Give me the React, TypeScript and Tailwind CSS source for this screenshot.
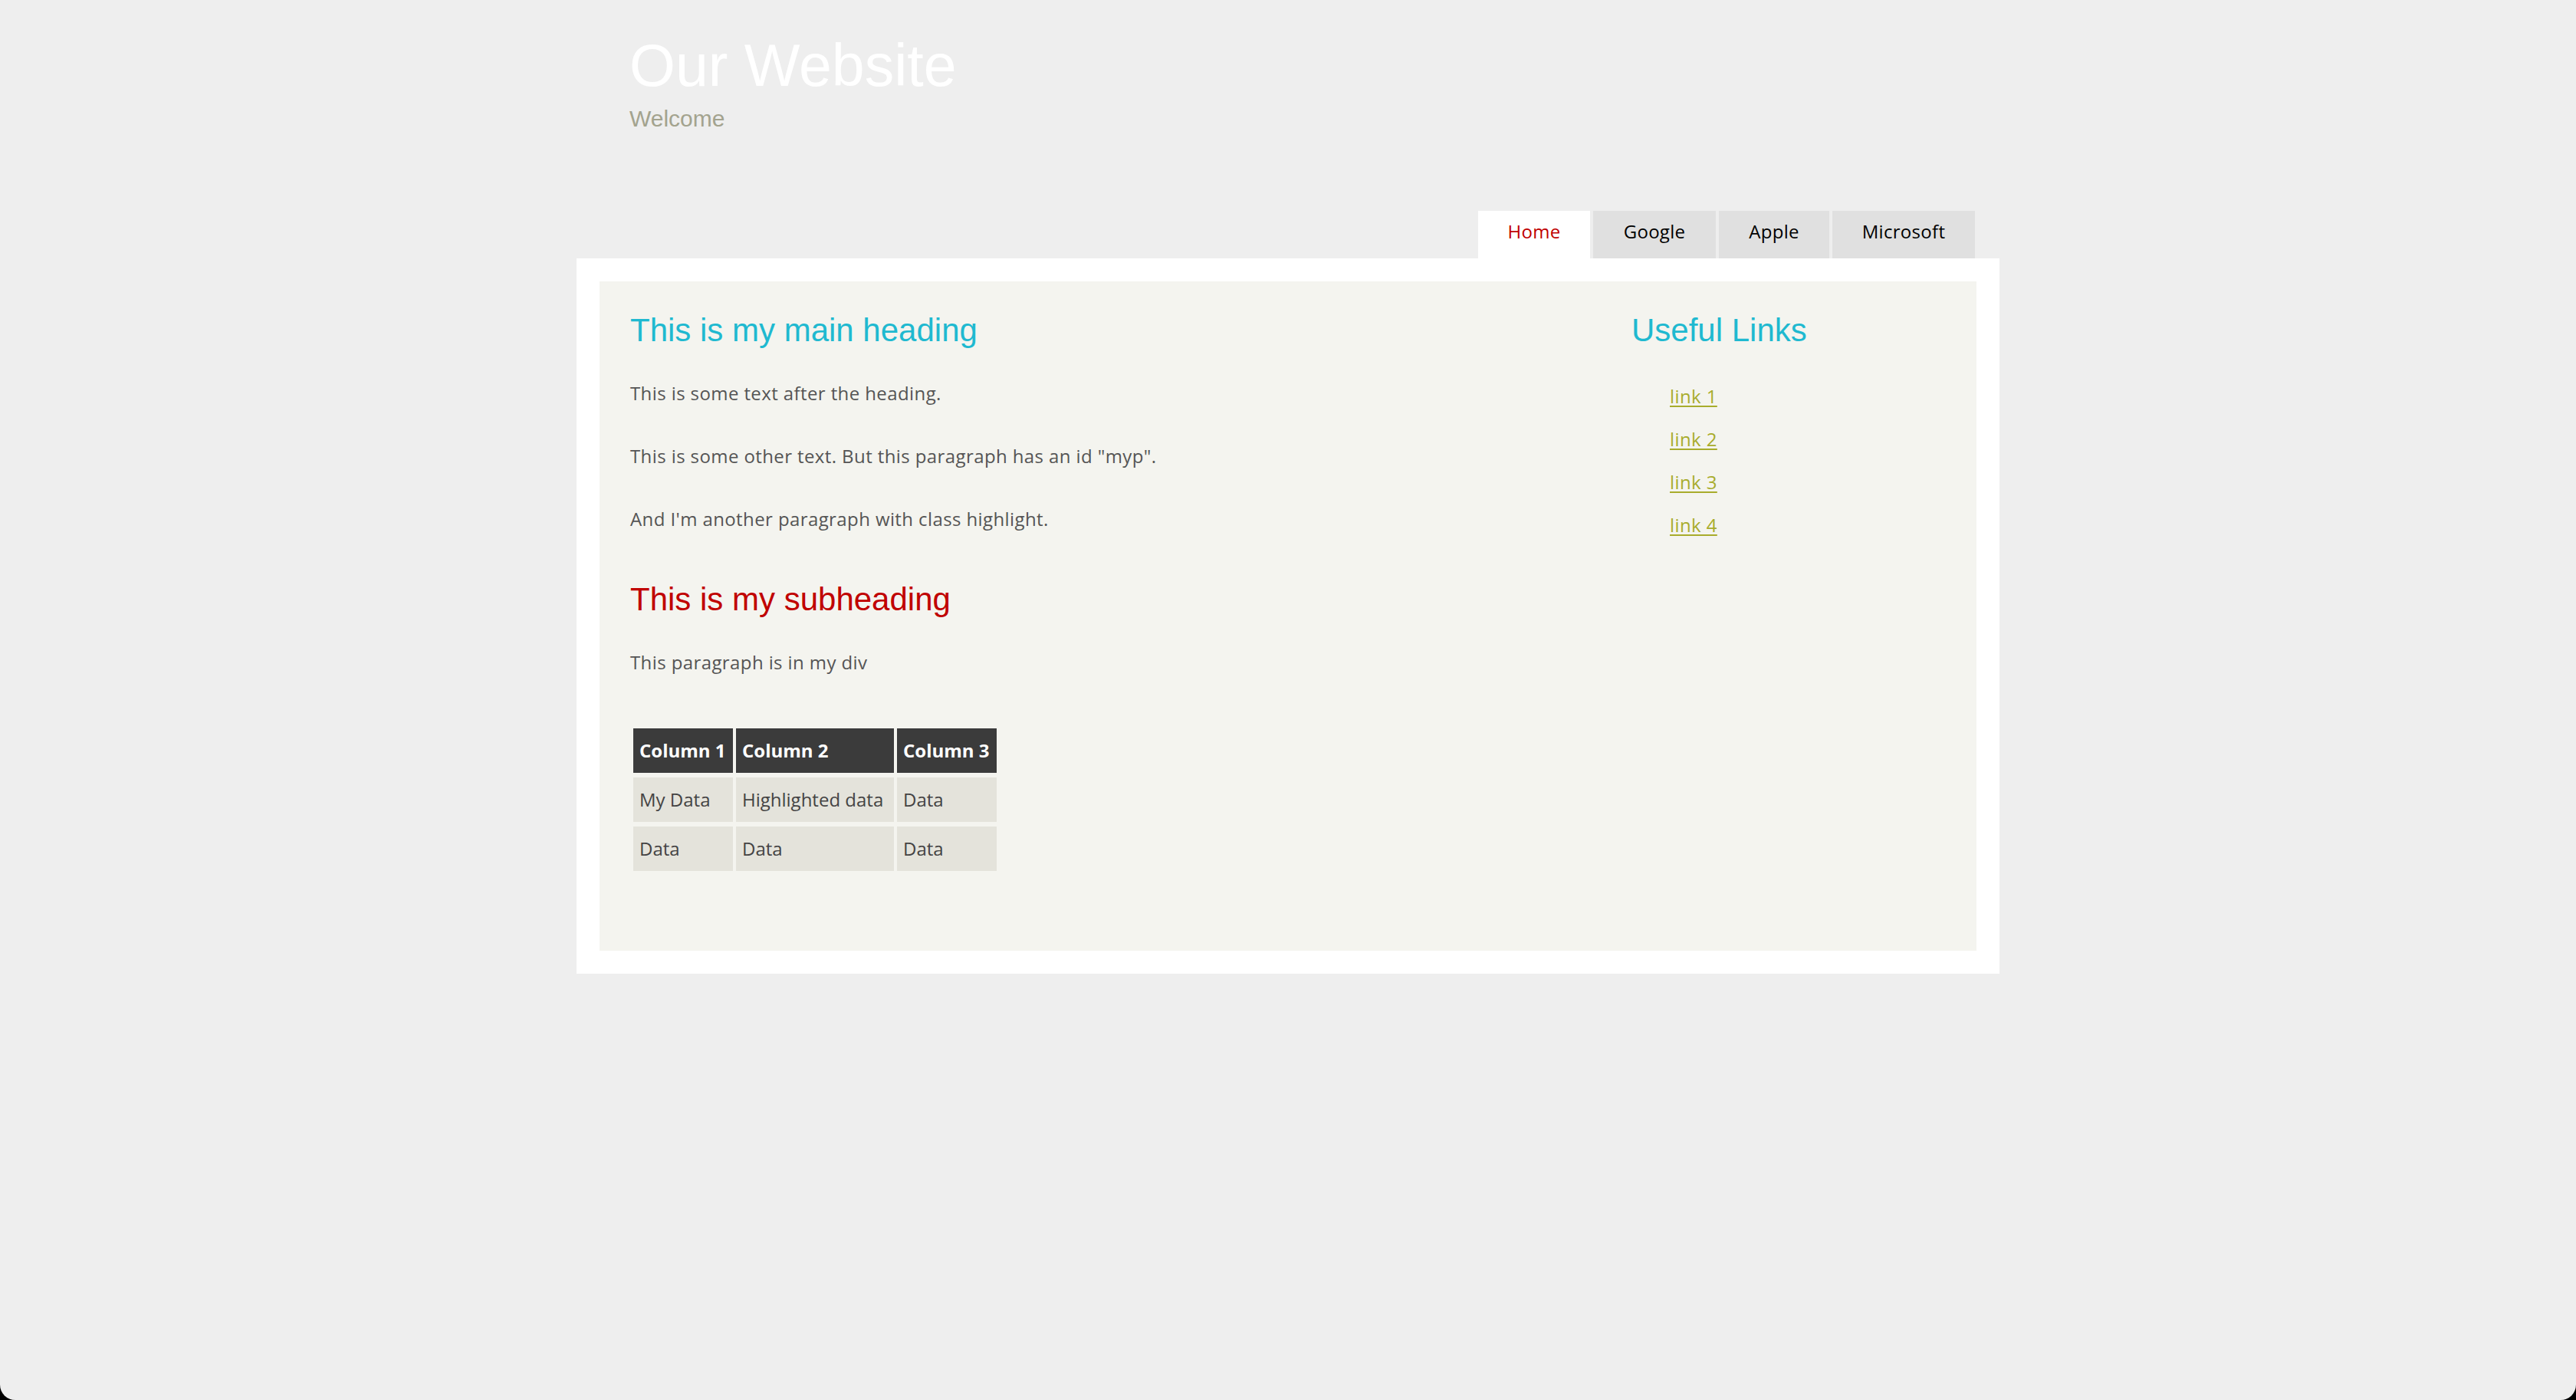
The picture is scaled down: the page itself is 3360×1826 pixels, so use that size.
import React from "react";

const body = { fontFamily: '"Open Sans", "Noto Sans", sans-serif' } as const;
const head = { fontFamily: '"Liberation Sans", Arial, sans-serif' } as const;

const tabs = [
  { label: "Home", w: "w-[146px]", active: true },
  { label: "Google", w: "w-[160px]", active: false },
  { label: "Apple", w: "w-[144px]", active: false },
  { label: "Microsoft", w: "w-[186px]", active: false },
];

export default function App() {
  return (
    <div className="bg-black min-h-[1826px]">
      <div className="h-[1826px] bg-[#eeeeee] rounded-b-[20px] overflow-hidden" style={body}>
        <div className="w-[1856px] mx-auto">
          <header className="pl-[69px] pt-[47px]">
            <h1 className="text-[77px] leading-[77px] text-white font-normal" style={head}>
              Our Website
            </h1>
            <p className="mt-[16px] text-[30px] leading-[30px] text-[#a3a38e]" style={head}>
              Welcome
            </p>
          </header>

          <nav className="mt-[105px] flex justify-end gap-[4px] pr-[32px]">
            {tabs.map((t) => (
              <a
                key={t.label}
                className={`${t.w} h-[62px] pb-[8px] flex items-center justify-center text-[24px] tracking-[0.3px] ${
                  t.active ? "bg-white text-[#c00000]" : "bg-[#e0e0e0] text-black"
                }`}
              >
                {t.label}
              </a>
            ))}
          </nav>

          <div className="bg-white p-[30px]">
            <div className="bg-[#f4f4ef] pl-[40px] pr-[40px] pt-[40px] pb-[40px] flex">
              <main className="flex-1 tracking-[0.4px]">
                <h2 className="text-[42px] leading-[48px] text-[#1fb9d0] font-normal tracking-normal" style={head}>
                  This is my main heading
                </h2>
                <p className="mt-[41px] text-[24px] leading-[34px] text-[#555555]">
                  This is some text after the heading.
                </p>
                <p className="mt-[48px] text-[24px] leading-[34px] text-[#555555]">
                  This is some other text. But this paragraph has an id "myp".
                </p>
                <p className="mt-[48px] text-[24px] leading-[34px] text-[#555555]">
                  And I'm another paragraph with class highlight.
                </p>
                <h3 className="mt-[64px] text-[42px] leading-[48px] text-[#c00000] font-normal tracking-normal" style={head}>
                  This is my subheading
                </h3>
                <p className="mt-[41px] text-[24px] leading-[34px] text-[#555555]">
                  This paragraph is in my div
                </p>
                <table className="mt-[63px] mb-[58px] border-separate border-spacing-x-[4px] border-spacing-y-[6px] text-[24px] tracking-normal">
                  <thead>
                    <tr className="h-[58px]">
                      <th className="w-[130px] bg-[#3b3b3b] text-white font-bold text-left px-[8px] whitespace-nowrap">Column 1</th>
                      <th className="w-[206px] bg-[#3b3b3b] text-white font-bold text-left px-[8px] whitespace-nowrap">Column 2</th>
                      <th className="w-[130px] bg-[#3b3b3b] text-white font-bold text-left px-[8px] whitespace-nowrap">Column 3</th>
                    </tr>
                  </thead>
                  <tbody className="text-[#444444]">
                    <tr className="h-[58px]">
                      <td className="bg-[#e4e3db] px-[8px] whitespace-nowrap">My Data</td>
                      <td className="bg-[#e4e3db] px-[8px] whitespace-nowrap">Highlighted data</td>
                      <td className="bg-[#e4e3db] px-[8px] whitespace-nowrap">Data</td>
                    </tr>
                    <tr className="h-[58px]">
                      <td className="bg-[#e4e3db] px-[8px]">Data</td>
                      <td className="bg-[#e4e3db] px-[8px]">Data</td>
                      <td className="bg-[#e4e3db] px-[8px]">Data</td>
                    </tr>
                  </tbody>
                </table>
              </main>
              <aside className="w-[410px]">
                <h2 className="text-[42px] leading-[48px] text-[#1fb9d0] font-normal" style={head}>
                  Useful Links
                </h2>
                <ul className="mt-[34px] pl-[50px] list-none">
                  {["link 1", "link 2", "link 3", "link 4"].map((l) => (
                    <li key={l} className="text-[24px] leading-[56px] tracking-[0.4px]">
                      <a className="text-[#a8ac2c] underline decoration-[2px] underline-offset-[3px]">{l}</a>
                    </li>
                  ))}
                </ul>
              </aside>
            </div>
          </div>
        </div>
      </div>
    </div>
  );
}
